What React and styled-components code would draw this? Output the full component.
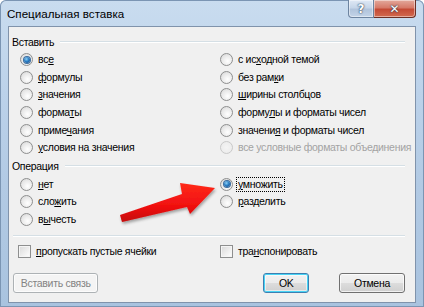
import styled, { createGlobalStyle } from 'styled-components';

const GlobalStyle = createGlobalStyle`
  html, body {
    margin: 0;
    padding: 0;
    background: #ffffff;
  }
  body {
    font-family: "Liberation Sans", Arial, sans-serif;
    font-size: 10.5px;
    letter-spacing: -0.3px;
    color: #000;
  }
`;

const Window = styled.div`
  position: relative;
  width: 424px;
  height: 307px;
  box-sizing: border-box;
  display: flex;
  flex-direction: column;
  padding: 0 8px 4px 8px;
  border-radius: 6px 6px 0 0;
  background: linear-gradient(180deg, #c9dcef 0%, #bcd2ea 30%, #b2cae4 60%, #a9c3df 100%);
  box-shadow: inset 0 0 0 1px #7b95b3;
  overflow: hidden;
`;

const TitleBar = styled.div`
  height: 26px;
  display: flex;
  align-items: flex-start;
  justify-content: space-between;
  margin-left: -1px;
`;

const Title = styled.div`
  padding-top: 7px;
  font-size: 11.6px;
  letter-spacing: 0;
  color: #000;
`;

const Caption = styled.div`
  display: flex;
`;

const CapButton = styled.div`
  width: ${(p) => p.$w}px;
  height: 18px;
  box-sizing: border-box;
  border: 1px solid ${(p) => (p.$close ? '#6b2f25' : '#6d84a0')};
  border-top: none;
  border-radius: ${(p) => (p.$close ? '0 0 4px 0' : '0 0 0 4px')};
  ${(p) => (p.$close ? 'border-left: none;' : '')}
  background: ${(p) =>
    p.$close
      ? 'linear-gradient(180deg, #e3a99c 0%, #d67a69 45%, #c44a35 55%, #d26a4f 100%)'
      : 'linear-gradient(180deg, #dfe9f5 0%, #c6d6e9 45%, #b1c4dc 55%, #c3d4e8 100%)'};
  box-shadow: inset 0 0 0 1px rgba(255, 255, 255, 0.45);
  display: flex;
  align-items: center;
  justify-content: center;
  color: #fff;
  font-family: "DejaVu Sans", sans-serif;
  font-weight: bold;
  font-size: 12px;
  letter-spacing: 0;
  text-shadow: 0 0 2px #233a55, 0 0 1px #233a55;
`;

const Client = styled.div`
  flex: 1;
  box-sizing: border-box;
  background: #f0f0f0;
  border: 1px solid #8093ab;
  padding: 6px 10px 0 3px;
  display: flex;
  flex-direction: column;
`;

const GroupHeader = styled.div`
  display: flex;
  align-items: center;
  gap: 6px;
  height: 17px;
  margin-top: ${(p) => p.$top || 0}px;
`;

const Rule = styled.div`
  flex: 1;
  height: 0;
  border-top: 1px solid #d5dfe5;
  border-bottom: 1px solid #ffffff;
`;

const Options = styled.div`
  display: grid;
  grid-template-columns: 200px 1fr;
  margin-left: 8px;
  margin-top: 1px;
`;

const OptionsCol = styled.div`
  display: grid;
  grid-template-rows: repeat(${(p) => p.$rows}, 17.6px);
`;

const Row = styled.div`
  display: flex;
  align-items: center;
  gap: 4px;
  color: ${(p) => (p.$disabled ? '#a3a3a3' : '#000')};
  white-space: nowrap;
`;

const Radio = styled.span`
  width: 13px;
  height: 13px;
  box-sizing: border-box;
  border-radius: 50%;
  border: 1px solid ${(p) => (p.$disabled ? '#c9c9c9' : '#8e8f8f')};
  background: ${(p) =>
    p.$disabled
      ? 'radial-gradient(circle at 50% 50%, #f4f4f4 0%, #eaeaea 100%)'
      : 'radial-gradient(circle at 60% 65%, #ffffff 0%, #e9e9e9 55%, #d2d2d2 100%)'};
  display: flex;
  align-items: center;
  justify-content: center;
  flex: none;
  &::after {
    content: '';
    display: ${(p) => (p.$checked ? 'block' : 'none')};
    width: 6px;
    height: 6px;
    border-radius: 50%;
    background: radial-gradient(circle at 40% 35%, #8fd0f5 0%, #2a7ec4 45%, #0e3f7d 100%);
    box-shadow: 0 0 0 1px #3c6d9e;
  }
`;

const Check = styled.span`
  width: 13px;
  height: 13px;
  box-sizing: border-box;
  border: 1px solid #8e8f8f;
  background: linear-gradient(135deg, #d9d9d9 0%, #f0f0f0 60%, #ffffff 100%);
  box-shadow: inset 0 0 0 1px #f5f5f5;
  flex: none;
`;

const Label = styled.span`
  padding: 1px 1px;
  border: 1px dotted ${(p) => (p.$focus ? '#000' : 'transparent')};
  margin-left: -1px;
  line-height: 11px;
`;

const Key = styled.span`
  text-decoration: underline;
  text-underline-offset: 1px;
`;

const Separator = styled.div`
  margin: 7px 0 0 1px;
  border-top: 1px solid #d5dfe5;
  border-bottom: 1px solid #ffffff;
`;

const CheckRow = styled.div`
  display: grid;
  grid-template-columns: 202px 1fr;
  margin: 6px 0 0 6px;
  height: 17px;
`;

const Buttons = styled.div`
  display: flex;
  align-items: center;
  margin-top: 13px;
  margin-left: 1px;
`;

const Button = styled.div`
  width: ${(p) => p.$w}px;
  height: 20px;
  box-sizing: border-box;
  border-radius: 3px;
  margin-left: ${(p) => p.$ml || 0}px;
  display: flex;
  align-items: center;
  justify-content: center;
  border: 1px solid ${(p) => (p.$disabled ? '#adb2b5' : p.$default ? '#3c7fb1' : '#707070')};
  color: ${(p) => (p.$disabled ? '#838383' : '#000')};
  background: ${(p) =>
    p.$disabled
      ? '#f4f4f4'
      : 'linear-gradient(180deg, #f2f2f2 0%, #ebebeb 49%, #dddddd 50%, #cfcfcf 100%)'};
  box-shadow: ${(p) =>
    p.$default
      ? 'inset 0 0 0 1px #48d4f5, inset 0 0 0 2px rgba(255,255,255,0.5)'
      : 'inset 0 0 0 1px rgba(255,255,255,0.7)'};
`;

const ArrowLayer = styled.svg`
  position: absolute;
  left: 0;
  top: 0;
  pointer-events: none;
`;

const K = ({ t, k }) => {
  if (k === undefined) return t;
  return (
    <>
      {t.slice(0, k)}
      <Key>{t[k]}</Key>
      {t.slice(k + 1)}
    </>
  );
};

const pasteLeft = [
  { t: 'все', k: 2, checked: true },
  { t: 'формулы', k: 0 },
  { t: 'значения', k: 0 },
  { t: 'форматы', k: 5 },
  { t: 'примечания', k: 5 },
  { t: 'условия на значения', k: 0 },
];

const pasteRight = [
  { t: 'с исходной темой', k: 4 },
  { t: 'без рамки', k: 7 },
  { t: 'ширины столбцов', k: 0 },
  { t: 'формулы и форматы чисел', k: 5 },
  { t: 'значения и форматы чисел', k: 7 },
  { t: 'все условные форматы объединения', disabled: true },
];

const opLeft = [
  { t: 'нет', k: 0 },
  { t: 'сложить', k: 3 },
  { t: 'вычесть', k: 1 },
];

const opRight = [
  { t: 'умножить', k: 0, checked: true, focus: true },
  { t: 'разделить', k: 0 },
];

const RadioList = ({ items, rows }) => (
  <OptionsCol $rows={rows}>
    {items.map((o) => (
      <Row key={o.t} $disabled={o.disabled}>
        <Radio $checked={o.checked} $disabled={o.disabled} />
        <Label $focus={o.focus}>
          <K t={o.t} k={o.k} />
        </Label>
      </Row>
    ))}
  </OptionsCol>
);

const App = () => {
  return (
    <Window>
      <GlobalStyle />
      <TitleBar>
        <Title>Специальная вставка</Title>
        <Caption>
          <CapButton $w={26}>?</CapButton>
          <CapButton $w={42} $close>
            ✕
          </CapButton>
        </Caption>
      </TitleBar>
      <Client>
        <GroupHeader>
          <span>Вставить</span>
          <Rule />
        </GroupHeader>
        <Options>
          <RadioList items={pasteLeft} rows={6} />
          <RadioList items={pasteRight} rows={6} />
        </Options>
        <GroupHeader $top={1}>
          <span>Операция</span>
          <Rule />
        </GroupHeader>
        <Options>
          <RadioList items={opLeft} rows={3} />
          <RadioList items={opRight} rows={3} />
        </Options>
        <Separator />
        <CheckRow>
          <Row>
            <Check />
            <Label>
              <K t="пропускать пустые ячейки" k={0} />
            </Label>
          </Row>
          <Row>
            <Check />
            <Label>
              <K t="транспонировать" k={3} />
            </Label>
          </Row>
        </CheckRow>
        <Buttons>
          <Button $w={88} $disabled>
            Вставить связь
          </Button>
          <Button $w={47} $ml={165} $default>
            OK
          </Button>
          <Button $w={68} $ml={30}>
            Отмена
          </Button>
        </Buttons>
      </Client>
      <ArrowLayer width="424" height="307" viewBox="0 0 424 307">
        <defs>
          <linearGradient id="arrowFill" x1="0" y1="0" x2="0" y2="1">
            <stop offset="0" stopColor="#ff2a1a" />
            <stop offset="0.6" stopColor="#f01010" />
            <stop offset="1" stopColor="#c40808" />
          </linearGradient>
          <filter id="arrowShadow" x="-20%" y="-20%" width="140%" height="140%">
            <feGaussianBlur in="SourceAlpha" stdDeviation="1.5" />
            <feOffset dx="1" dy="2" result="b" />
            <feComponentTransfer>
              <feFuncA type="linear" slope="0.35" />
            </feComponentTransfer>
            <feMerge>
              <feMergeNode />
              <feMergeNode in="SourceGraphic" />
            </feMerge>
          </filter>
        </defs>
        <polygon
          points="215,188 180,183 182,194 120,215 122,222 187,207 190,214"
          fill="url(#arrowFill)"
          filter="url(#arrowShadow)"
        />
      </ArrowLayer>
    </Window>
  );
};

export default App;
